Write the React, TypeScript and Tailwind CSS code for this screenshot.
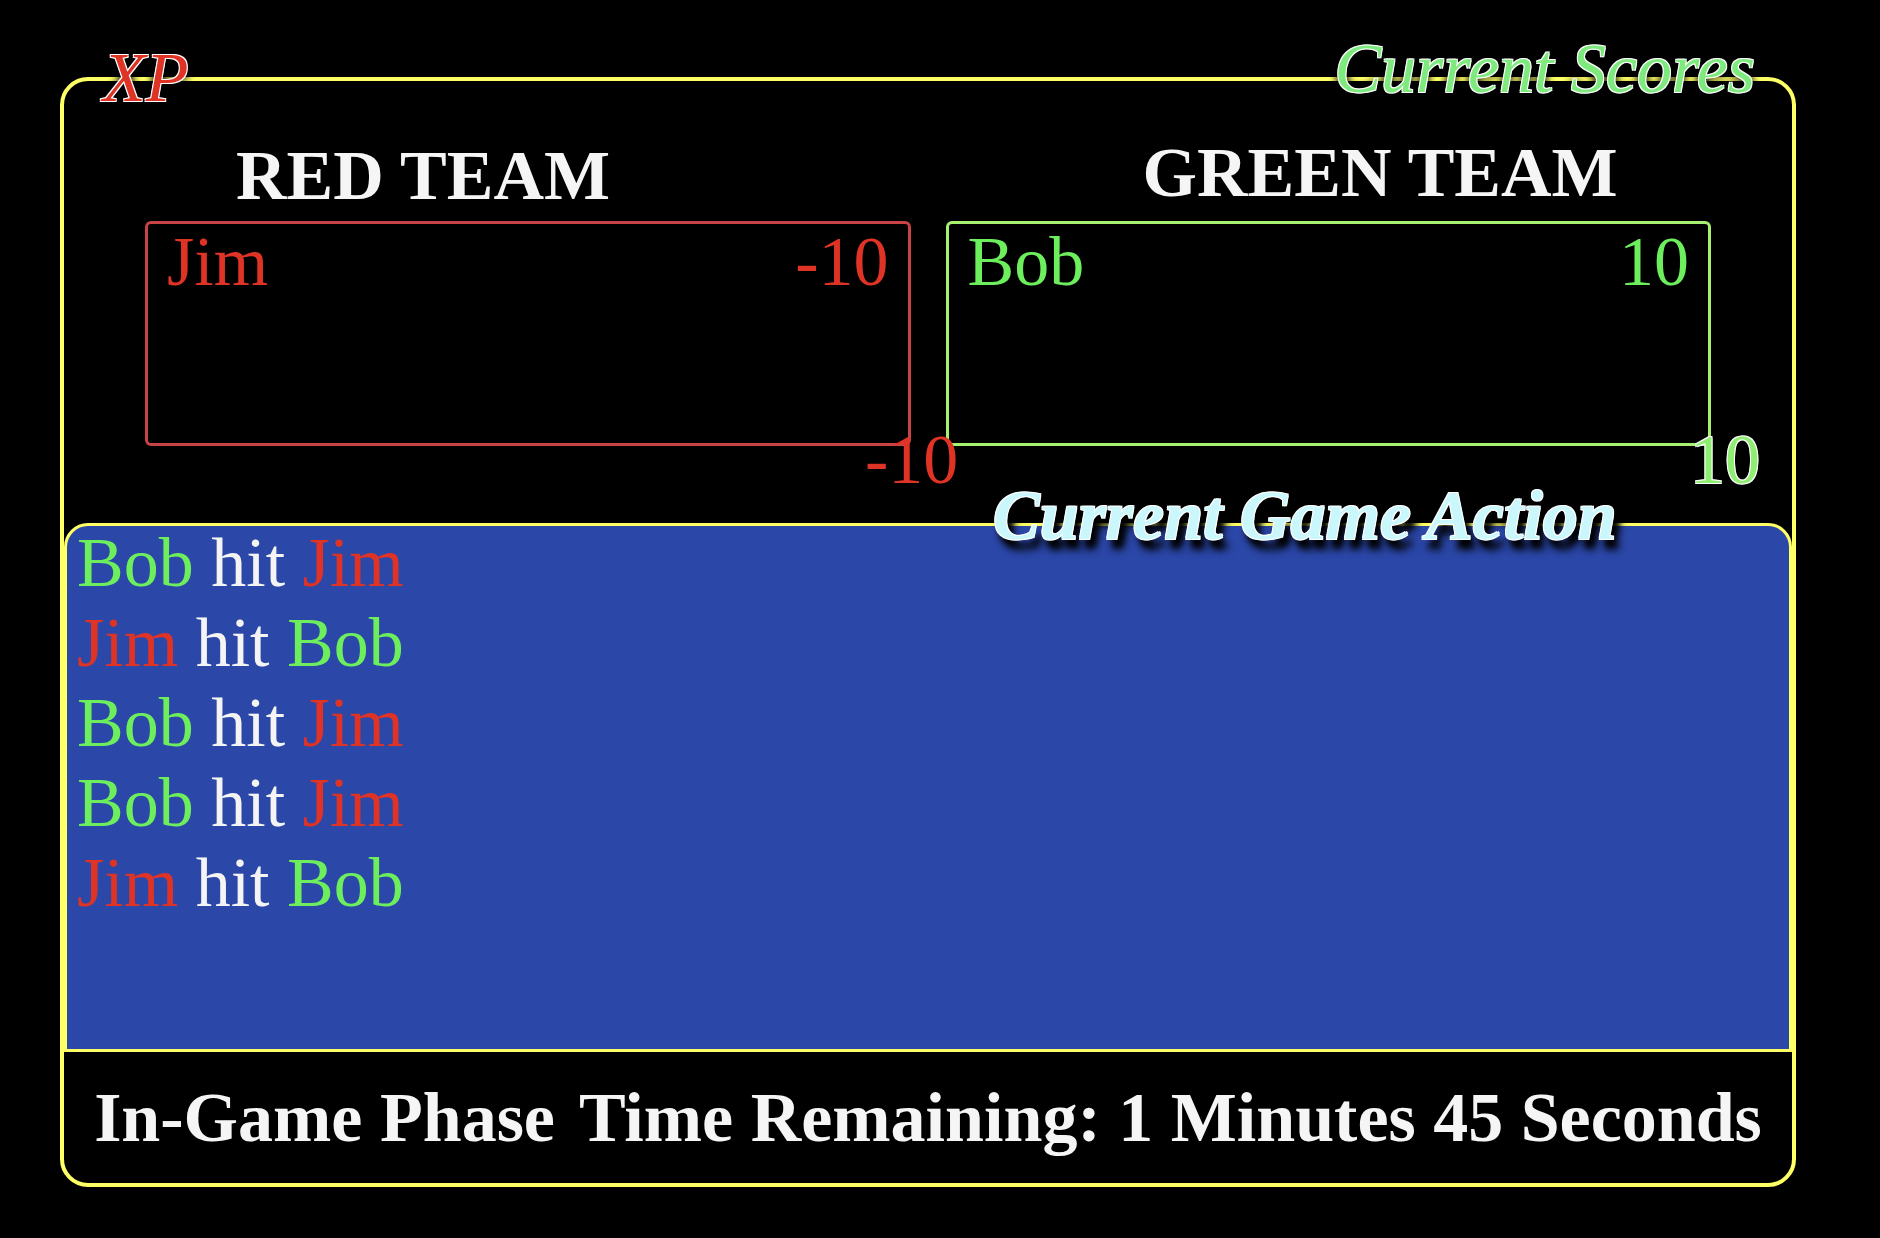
import React from 'react';

type Hit = { shooter: string; target: string };

const RED = 'text-[#df3326]';
const GREEN = 'text-[#6def5d]';

const log: Hit[] = [
  { shooter: 'Bob', target: 'Jim' },
  { shooter: 'Jim', target: 'Bob' },
  { shooter: 'Bob', target: 'Jim' },
  { shooter: 'Bob', target: 'Jim' },
  { shooter: 'Jim', target: 'Bob' },
];

const teamOf = (name: string) => (name === 'Jim' ? RED : GREEN);

export default function App() {
  return (
    <div className="min-h-[1238px] w-full bg-black pt-[77px] pl-[60px] font-['Liberation_Serif',serif]">
      <div className="relative flex h-[1110px] w-[1736px] flex-col rounded-[28px] border-4 border-[#ffff66]">
        {/* corner titles sitting on the frame */}
        <span className="absolute -top-[43px] left-[39px] text-[70px] leading-[80px] italic text-[#df3326] [text-shadow:1px_1px_0_#fff,-1px_-1px_0_#fff,1px_-1px_0_#fff,-1px_1px_0_#fff,0_0_10px_#000,0_0_10px_#000]">
          XP
        </span>
        <span className="absolute -top-[52px] right-[37px] text-[70px] leading-[80px] italic text-[#7eea7e] [text-shadow:1px_1px_0_#fff,-1px_-1px_0_#fff,1px_-1px_0_#fff,-1px_1px_0_#fff,0_0_10px_#000,0_0_10px_#000]">
          Current Scores
        </span>

        {/* scores */}
        <div className="grid h-[442px] grid-cols-2 gap-[35px] px-[81px]">
          <TeamColumn
            title="RED TEAM"
            headerClass="pt-[55px] pl-[91px]"
            boxClass="border-[#c84444]"
            textClass={RED}
            player="Jim"
            score="-10"
          />
          <TeamColumn
            title="GREEN TEAM"
            headerClass="pt-[52px] pl-[197px] pb-[3px]"
            boxClass="border-[#a8f070]"
            textClass={GREEN}
            player="Bob"
            score="10"
          />
        </div>

        <span className="absolute top-[339px] left-[801px] text-[70px] leading-[80px] text-[#df3326]">-10</span>
        <span className="absolute top-[339px] left-[1626px] text-[70px] leading-[80px] text-[#8fee72] [text-shadow:1px_1px_0_#fff,-1px_-1px_0_#fff,1px_-1px_0_#fff,-1px_1px_0_#fff]">
          10
        </span>

        {/* action log */}
        <div className="h-[529px] rounded-t-[24px] border-[3px] border-[#ffff66] bg-[#2b47a8] pl-[10px]">
          <ul className="-mt-[3px] text-[70px] leading-[80px]">
            {log.map((h, i) => (
              <li key={i}>
                <span className={teamOf(h.shooter)}>{h.shooter}</span>
                <span className="text-[#f4f4f4]"> hit </span>
                <span className={teamOf(h.target)}>{h.target}</span>
              </li>
            ))}
          </ul>
        </div>

        <span className="absolute top-[395px] left-[929px] text-[70px] leading-[80px] font-bold italic text-[#c9f7fb] [text-shadow:1px_1px_0_#fff,-1px_-1px_0_#fff,1px_-1px_0_#fff,-1px_1px_0_#fff,5px_8px_6px_#000,6px_10px_10px_#000]">
          Current Game Action
        </span>

        {/* timer */}
        <div className="flex flex-1 items-center justify-center gap-[24px] text-[70px] leading-[80px] font-bold text-[#f5f5f5]">
          <span>In-Game Phase</span>
          <span>Time Remaining: 1 Minutes 45 Seconds</span>
        </div>
      </div>
    </div>
  );
}

function TeamColumn({
  title,
  headerClass,
  boxClass,
  textClass,
  player,
  score,
}: {
  title: string;
  headerClass: string;
  boxClass: string;
  textClass: string;
  player: string;
  score: string;
}) {
  return (
    <div className="flex flex-col">
      <h2 className={`text-[70px] leading-[80px] font-bold text-[#f5f5f5] ${headerClass}`}>{title}</h2>
      <div className={`mt-[5px] h-[225px] rounded-[6px] border-[3px] px-[19px] ${boxClass}`}>
        <div className={`flex justify-between text-[70px] leading-[75px] ${textClass}`}>
          <span>{player}</span>
          <span>{score}</span>
        </div>
      </div>
    </div>
  );
}
